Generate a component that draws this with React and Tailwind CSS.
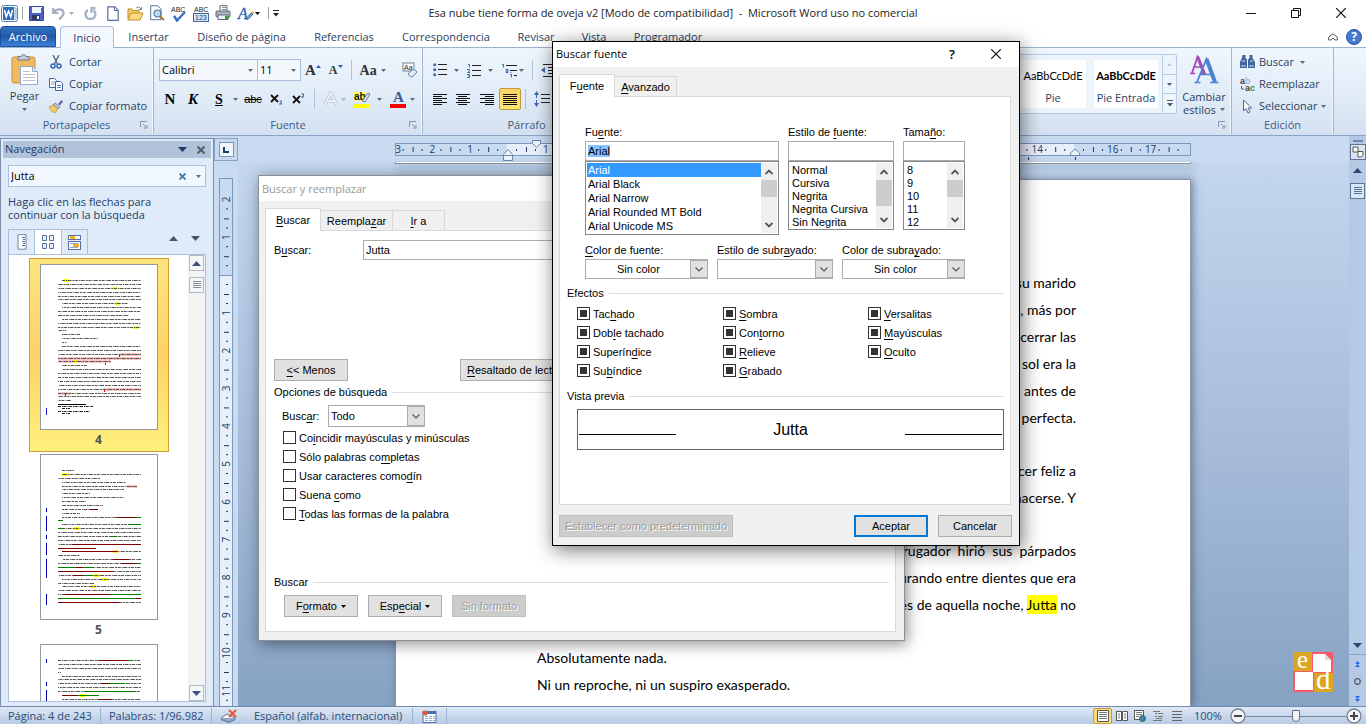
import { useEffect, useRef } from "react";

/* ---------- small shared pieces ---------- */

function Caret({ className = "" }) {
  return (
    <svg className={`shrink-0 ${className}`} width="5" height="3" viewBox="0 0 5 3" aria-hidden="true">
      <path d="M0 0h5L2.500 3z" fill="currentColor" />
    </svg>
  );
}

function IconButton({ label, className = "", children }) {
  return (
    <button type="button" aria-label={label} className={`flex shrink-0 items-center justify-center ${className}`}>
      {children}
    </button>
  );
}

function Launcher({ label }) {
  return (
    <IconButton label={label} className="absolute right-1 bottom-1 size-2.5">
      <svg width="8" height="8" viewBox="0 0 8 8" fill="none" stroke="#8496ad">
        <path d="M.5 6V.5H7M3 3l3 3M7 4v3H4" />
      </svg>
    </IconButton>
  );
}

function Group({ name, className = "", children, launcher = true, caption = true }) {
  return (
    <section
      aria-label={name}
      className={`relative flex flex-col border-r border-[#9fb4d0] shadow-[inset_-1px_0_0_#f4f9ff] ${className}`}
    >
      <div className="flex min-h-0 flex-1">{children}</div>
      <div className="flex h-[17px] shrink-0 items-center justify-center text-[#3e5b86]">{caption && name}</div>
      {launcher && <Launcher label={`Opciones de ${name}`} />}
    </section>
  );
}

/* ---------- title bar ---------- */

function WordIcon() {
  return (
    <svg width="17" height="17" viewBox="0 0 17 17">
      <rect x=".5" y=".5" width="16" height="16" rx="2" fill="#fff" stroke="#4a83bd" />
      <rect x="2" y="2" width="11" height="13" fill="#2b6cb5" />
      <path d="M13 3h2v11h-2M13 6h2M13 8.500h2M13 11h2" stroke="#7fa9d6" fill="none" />
      <path d="M3.500 5l1.700 7L7.500 6l2.300 6 1.700-7" stroke="#fff" strokeWidth="1.500" fill="none" />
    </svg>
  );
}

function QuickAccess() {
  return (
    <div className="flex h-6 items-center pl-px">
      <IconButton label="Word"><WordIcon /></IconButton>
      <span className="mx-1 h-3 w-px bg-[#a0a0a0]" />
      <IconButton label="Guardar" className="ml-0.5">
        <svg width="15" height="15" viewBox="0 0 15 15">
          <path d="M.5.500h14v14h-14z" fill="#4b63c6" stroke="#3a4da5" />
          <rect x="3" y="1" width="9" height="6" fill="#eef2fb" />
          <path d="M12.500 1v1" stroke="#fff" />
          <rect x="3" y="9" width="8" height="5" fill="#2e3b5c" />
          <rect x="8" y="10" width="2" height="3" fill="#fff" />
        </svg>
      </IconButton>
      <IconButton label="Deshacer" className="ml-2">
        <svg width="13" height="13" viewBox="0 0 13 13" fill="none" stroke="#a3b0c2" strokeWidth="2.200">
          <path d="M1.200 1v5h5M1.500 5.500C4 2 10 1 11.500 5c.8 3-1.500 5-4.500 7.500" />
        </svg>
      </IconButton>
      <Caret className="ml-1 text-[#a9a9a9]" />
      <IconButton label="Rehacer" className="ml-2.5">
        <svg width="13" height="13" viewBox="0 0 13 13" fill="none" stroke="#a3b0c2" strokeWidth="2.200">
          <path d="M4 3C0 5 1 12 6.500 12c5 0 6.500-6 3-9M6.500 1.200h5M7.500 1v5" />
        </svg>
      </IconButton>
      <IconButton label="Nuevo" className="ml-2.5">
        <svg width="12" height="15" viewBox="0 0 12 15">
          <path d="M.8.800h7l3.400 3.500v10H.8z" fill="#fff" stroke="#53719c" strokeWidth="1.200" />
          <path d="M7.500 1v3.500H11" fill="#d4e2f3" stroke="#53719c" />
        </svg>
      </IconButton>
      <IconButton label="Abrir" className="ml-2">
        <svg width="17" height="15" viewBox="0 0 17 15">
          <path d="M1 13V3h4l1 1.500h6V7" fill="#f6cf6b" stroke="#b98a25" />
          <path d="M1 14L4 7h12l-3 7z" fill="#fbdb80" stroke="#c3912a" />
          <path d="M9 2c2-1.500 4-1 5 1.500M12 3.500h2.500V1" fill="none" stroke="#6c7fa3" />
        </svg>
      </IconButton>
      <IconButton label="Vista preliminar" className="ml-1.5">
        <svg width="15" height="16" viewBox="0 0 15 16">
          <path d="M.7.700h7l3.300 3.500v10.500H.7z" fill="#fff" stroke="#53719c" />
          <circle cx="7.500" cy="8.500" r="3.500" fill="#bcd8f2" stroke="#5a7399" strokeWidth="1.200" />
          <path d="M10 11.500l4 3.500" stroke="#a8752c" strokeWidth="2" />
        </svg>
      </IconButton>
      <IconButton label="Ortografía" className="ml-1.5">
        <svg width="16" height="17" viewBox="0 0 16 17">
          <text x="0" y="7" fontSize="7" fontFamily="Liberation Sans" fill="#222">ABC</text>
          <path d="M3 11l3 4.500L14 7" stroke="#3b6fd1" strokeWidth="2.500" fill="none" />
        </svg>
      </IconButton>
      <IconButton label="Contar palabras" className="ml-1.5">
        <svg width="16" height="17" viewBox="0 0 16 17">
          <text x="1" y="7" fontSize="7" fontFamily="Liberation Sans" fill="#222">ABC</text>
          <rect x=".5" y="8.500" width="15" height="8" fill="#d9e4f5" stroke="#46649a" />
          <text x="2" y="15" fontSize="7" fontFamily="Liberation Sans" fill="#203a72">123</text>
        </svg>
      </IconButton>
      <IconButton label="Imprimir" className="ml-1.5">
        <svg width="16" height="16" viewBox="0 0 16 16">
          <path d="M5 6V.700h7V6" fill="#fff" stroke="#5a6880" />
          <path d="M7 2.500h4M7 4.500h4" stroke="#7fa17f" />
          <rect x="1" y="6" width="14" height="6" rx="1" fill="#a9b1bd" stroke="#606a7b" />
          <path d="M3 10h10v4.500H3z" fill="#eef1f5" stroke="#606a7b" />
          <rect x="10" y="11" width="4" height="3" fill="#3c9a3c" />
        </svg>
      </IconButton>
      <IconButton label="Estilos rápidos" className="ml-1.5">
        <svg width="17" height="16" viewBox="0 0 17 16">
          <text x="1" y="14" fontSize="16" fontStyle="italic" fontFamily="Liberation Serif" fill="#3465b5" stroke="#3465b5" strokeWidth=".4">A</text>
          <path d="M9 14l5-6 2 1-5 5.500z" fill="#8db4e8" stroke="#35588f" />
          <path d="M14 8l1.500-2L17 7l-1 2z" fill="#e0a94a" />
        </svg>
      </IconButton>
      <Caret className="ml-px text-black" />
      <span className="ml-2 h-3 w-px bg-[#9a9a9a]" />
      <IconButton label="Personalizar barra" className="ml-1">
        <svg width="6" height="7" viewBox="0 0 6 7"><path d="M0 .500h6" stroke="#222" /><path d="M0 3h6L3 6.500z" fill="#222" /></svg>
      </IconButton>
    </div>
  );
}

function TitleBar() {
  return (
    <header className="relative flex h-[26px] shrink-0 items-center justify-between bg-white">
      <div className="flex-1"><QuickAccess /></div>
      <h1 className="whitespace-pre text-[11px] text-[#1c1c1c]">
        Esa nube tiene forma de oveja v2 [Modo de compatibilidad]  -  Microsoft Word uso no comercial
      </h1>
      <div className="flex flex-1 justify-end gap-[35px] pr-5">
        <IconButton label="Minimizar">
          <svg width="10" height="10" viewBox="0 0 10 10"><path d="M0 5.500h10" stroke="#111" /></svg>
        </IconButton>
        <IconButton label="Restaurar">
          <svg width="10" height="10" viewBox="0 0 10 10" fill="none" stroke="#111"><path d="M.5 2.500h7v7h-7zM2.500 2V.500h7v7H8" /></svg>
        </IconButton>
        <IconButton label="Cerrar">
          <svg width="10" height="10" viewBox="0 0 10 10"><path d="M0 0l10 10M10 0L0 10" stroke="#111" strokeWidth="1.200" /></svg>
        </IconButton>
      </div>
    </header>
  );
}

/* ---------- ribbon ---------- */

function RibbonTabs() {
  return (
    <nav className="flex h-[22px] shrink-0 items-stretch border-b border-[#9cb3d0] bg-white leading-[22px] text-[#29415f]">
      <button type="button" className="w-14 rounded-t-sm border border-[#1a4f9e] bg-linear-to-b from-[#3673c2] via-[#1f58a9] to-[#3f82d8] leading-5 font-medium text-white">
        Archivo
      </button>
      <button type="button" className="-mb-px ml-1 h-[23px] w-[54px] rounded-t-sm border border-b-0 border-[#aabfdb] bg-[#f3f8fe]">Inicio</button>
      <button type="button" className="w-[67px] pl-0.5">Insertar</button>
      <button type="button" className="w-[119px] pl-0.5">Diseño de página</button>
      <button type="button" className="w-[88px]">Referencias</button>
      <button type="button" className="w-[114px] pl-0.5">Correspondencia</button>
      <button type="button" className="w-[66px] pl-0.5">Revisar</button>
      <button type="button" className="w-[50px] pl-0.5">Vista</button>
      <button type="button" className="w-[98px] pl-0.5">Programador</button>
      <div className="ml-auto flex items-center gap-2 pr-1">
        <IconButton label="Minimizar la cinta de opciones">
          <svg width="10" height="8" viewBox="0 0 10 8" fill="#fff" stroke="#55585e"><path d="M.7 4L5 .800 9.300 4v3H7L5 5 3 7H.700z" /></svg>
        </IconButton>
        <IconButton label="Ayuda" className="size-4 rounded-full border border-[#2453a8] bg-[#4579cf] text-[12px] leading-none font-bold text-white">?</IconButton>
      </div>
    </nav>
  );
}

function ClipboardGroup() {
  return (
    <Group name="Portapapeles" className="w-[154px]">
      <button type="button" className="flex w-[49px] flex-col items-center pt-1.5 text-[#29415f]">
        <svg width="28" height="32" viewBox="0 0 28 32">
          <rect x="1" y="3" width="23" height="26" rx="2" fill="#eebb62" stroke="#cb9235" />
          <path d="M7 5V2.500h3c.5-2.500 4.500-2.500 5 0h3V6H7z" fill="#c8ccd2" stroke="#6f7580" />
          <path d="M9.500 12.500h12l5 5v13h-17z" fill="#fff" stroke="#9aa9c3" />
          <path d="M21.500 12.500v5h5" fill="#dfe7f3" stroke="#9aa9c3" />
          <path d="M12 17.500h7M12 20.500h12M12 23.500h12M12 26.500h12" stroke="#b5bfd0" />
        </svg>
        <span className="mt-0.5 leading-4">Pegar</span>
        <Caret className="mt-1 text-[#5c6b80]" />
      </button>
      <div className="flex flex-col pt-[3px] text-[#29415f]">
        <button type="button" className="flex h-[22px] items-center gap-1.5">
          <svg width="14" height="14" viewBox="0 0 14 14" fill="none">
            <path d="M4 0l4.500 9M10 0L5.500 9" stroke="#60708c" strokeWidth="1.500" />
            <circle cx="4" cy="11" r="2" stroke="#2f62b8" strokeWidth="1.500" /><circle cx="10" cy="11" r="2" stroke="#2f62b8" strokeWidth="1.500" />
          </svg>
          Cortar
        </button>
        <button type="button" className="flex h-[22px] items-center gap-1.5">
          <svg width="14" height="13" viewBox="0 0 14 13" fill="#fff" stroke="#3f63a8">
            <path d="M.5.500h5l2 2v7h-7z" /><path d="M2 4h4M2 6h4" stroke="#8aa5d2" /><path d="M6.500 3.500h5l2 2v7h-7z" /><path d="M8 7.500h4M8 9.500h4" stroke="#5c7fc0" />
          </svg>
          Copiar
        </button>
        <button type="button" className="flex h-[22px] items-center gap-1.5 whitespace-nowrap">
          <svg width="14" height="13" viewBox="0 0 14 13">
            <path d="M9 4l3.500-4L14 1.500 11 5.500z" fill="#7a5bb0" />
            <path d="M6 3l5 4-2 2-5-4z" fill="#b9c1cc" stroke="#677182" strokeWidth=".7" />
            <path d="M4 5l5 4-3 4C3 12 1 10 0 7z" fill="#f1c86a" stroke="#b88c33" strokeWidth=".7" />
          </svg>
          Copiar formato
        </button>
      </div>
    </Group>
  );
}

function FontGroup() {
  return (
    <Group name="Fuente" className="w-[269px]">
      <div className="flex w-full flex-col gap-[7px] pt-[11px] pl-[5px]">
        <div className="flex h-[22px] items-center">
          <div className="flex h-[22px] w-[99px] items-center border border-[#a9bfdd] bg-[#f4f8fd] pr-1">
            <input aria-label="Fuente" defaultValue="Calibri" className="w-full min-w-0 bg-transparent pl-0.5 text-black outline-none" />
            <Caret className="text-[#5c6b80]" />
          </div>
          <div className="-ml-px flex h-[22px] w-11 items-center border border-[#a9bfdd] bg-[#f4f8fd] pr-1">
            <input aria-label="Tamaño de fuente" defaultValue="11" className="w-full min-w-0 bg-transparent pl-0.5 text-black outline-none" />
            <Caret className="text-[#5c6b80]" />
          </div>
          <IconButton label="Agrandar fuente" className="ml-1 font-['Liberation_Serif',serif] text-[15px] font-bold text-[#333]">
            A<svg className="mb-2" width="5" height="3" viewBox="0 0 5 3"><path d="M0 3h5L2.500 0z" fill="#2b5aa8" /></svg>
          </IconButton>
          <IconButton label="Encoger fuente" className="ml-2 font-['Liberation_Serif',serif] text-[12px] font-bold text-[#333]">
            A<svg className="mb-2" width="5" height="3" viewBox="0 0 5 3"><path d="M0 0h5L2.500 3z" fill="#2b5aa8" /></svg>
          </IconButton>
          <span className="mx-2 h-5 w-px bg-[#b3c3d9]" />
          <IconButton label="Cambiar mayúsculas y minúsculas" className="font-['Liberation_Serif',serif] text-[14px] font-bold text-[#333]">
            Aa<Caret className="ml-1 text-[#5c6b80]" />
          </IconButton>
          <IconButton label="Borrar formato" className="ml-4">
            <svg width="16" height="16" viewBox="0 0 16 16">
              <rect x="1" y="1" width="11" height="8" fill="#fff" stroke="#6f7f99" />
              <text x="2" y="8" fontSize="7" fontFamily="Liberation Sans" fill="#222">Aa</text>
              <path d="M6 12l4-4c2-1 4 0 5 2l-4 4.500c-2 1-4-.5-5-2.500z" fill="#dfe9f8" stroke="#6782ad" />
            </svg>
          </IconButton>
        </div>
        <div className="flex h-[22px] items-center font-['Liberation_Serif',serif] text-[14px] font-bold text-black">
          <button type="button" className="w-[22px] text-[15px]">N</button>
          <button type="button" className="w-[24px] text-[15px] italic">K</button>
          <button type="button" className="ml-1 w-5 underline">S</button>
          <Caret className="ml-1 text-[#5c6b80]" />
          <button type="button" className="ml-1.5 w-[18px] font-['Liberation_Sans',sans-serif] text-[11px] font-normal line-through">abc</button>
          <IconButton label="Subíndice" className="ml-1.5 w-4">
            <svg width="13" height="12" viewBox="0 0 13 12"><path d="M1 2l7 7M8 2L1 9" stroke="#111" strokeWidth="1.800" /><path d="M9.500 8h2v1.500l-2 1.500h2.500" stroke="#2b5aa8" fill="none" /></svg>
          </IconButton>
          <IconButton label="Superíndice" className="ml-1.5 w-4">
            <svg width="13" height="12" viewBox="0 0 13 12"><path d="M1 3l7 7M8 3L1 10" stroke="#111" strokeWidth="1.800" /><path d="M9.500 1h2v1.500l-2 1.500h2.500" stroke="#2b5aa8" fill="none" /></svg>
          </IconButton>
          <span className="mx-2 h-5 w-px bg-[#b3c3d9]" />
          <IconButton label="Efectos de texto" className="text-[#aab4c2]">
            <svg width="16" height="16" viewBox="0 0 16 16"><path d="M2 14L7.500 2 14 14M5 10h6.500" fill="none" stroke="#c3cbd6" strokeWidth="3.500" /><path d="M2 14L7.500 2 14 14M5 10h6.500" fill="none" stroke="#f7fafd" strokeWidth="1.300" /></svg>
            <Caret className="ml-0.5" />
          </IconButton>
          <IconButton label="Color de resaltado" className="ml-2">
            <svg width="17" height="18" viewBox="0 0 17 18">
              <rect x="0" y="2" width="12" height="9" fill="#ffff6b" />
              <text x="0" y="10" fontSize="10" fontFamily="Liberation Sans" fill="#111">ab</text>
              <path d="M8 11l6-8 2 1-5 8z" fill="#dfe6f0" stroke="#4c5f80" strokeWidth=".8" />
              <rect x="0" y="14" width="16" height="4" fill="#ff0" />
            </svg>
            <Caret className="ml-1.5 text-[#5c6b80]" />
          </IconButton>
          <IconButton label="Color de fuente" className="ml-2">
            <svg width="16" height="18" viewBox="0 0 16 18">
              <text x="3" y="12" fontSize="15" fontWeight="bold" fontFamily="Liberation Serif" fill="#3a5a98">A</text>
              <rect x="0" y="14" width="16" height="4" fill="#f00" />
            </svg>
            <Caret className="ml-1 text-[#5c6b80]" />
          </IconButton>
        </div>
      </div>
    </Group>
  );
}

function AlignIcon({ kind }) {
  const short = { left: [0, 9], center: [2, 11], right: [5, 14], full: [0, 14] }[kind];
  return (
    <svg width="14" height="13" viewBox="0 0 14 13" stroke="#111">
      {[0, 1, 2, 3, 4, 5].map((i) => {
        const [a, b] = i % 2 ? short : [0, 14];
        return <path key={i} d={`M${a} ${i * 2 + 1.5}H${b}`} />;
      })}
    </svg>
  );
}

function ParagraphGroup() {
  return (
    <Group name="Párrafo" className="w-[208px]" launcher={false}>
      <div className="flex flex-col gap-[7px] pt-[11px] pl-[10px]">
        <div className="flex h-[22px] items-center">
          <IconButton label="Viñetas">
            <svg width="14" height="14" viewBox="0 0 14 14"><path d="M5 1.500h9M5 6.500h9M5 11.500h9" stroke="#222" /><g fill="#3b66b0"><circle cx="1.700" cy="1.700" r="1.500" /><circle cx="1.700" cy="6.700" r="1.500" /><circle cx="1.700" cy="11.700" r="1.500" /></g></svg>
            <Caret className="ml-[7px] text-[#5c6b80]" />
          </IconButton>
          <IconButton label="Numeración" className="ml-2">
            <svg width="14" height="15" viewBox="0 0 14 15"><path d="M5 2.500h9M5 7.500h9M5 12.500h9" stroke="#222" /><path d="M1 1.500h1.500v3M0 6.500h2.500v1.500L.5 9.500h2.500M0 11.500h2.500v3H0M1 13h1.500" stroke="#3b66b0" fill="none" /></svg>
            <Caret className="ml-[7px] text-[#5c6b80]" />
          </IconButton>
          <IconButton label="Lista multinivel" className="ml-2">
            <svg width="16" height="15" viewBox="0 0 16 15"><path d="M5 2.500h11M9 7.500h7M13 12.500h3" stroke="#222" /><path d="M1 1.500h1.500v3M4.500 6.500h2.500v3H5V8h2M9 11.500h1.500v3M9.500 9.500h1" stroke="#3b66b0" fill="none" /></svg>
            <Caret className="ml-0.5 text-[#5c6b80]" />
          </IconButton>
          <span className="mx-2 h-5 w-px bg-[#b3c3d9]" />
          <IconButton label="Disminuir sangría">
            <svg width="15" height="14" viewBox="0 0 15 14"><path d="M2 1.500h13M7 4.500h8M7 7.500h8M7 10.500h8M2 13.500h13" stroke="#222" /><path d="M0 7l4-3v6z" fill="#3b66b0" /></svg>
          </IconButton>
        </div>
        <div className="flex h-[22px] items-center">
          <IconButton label="Alinear a la izquierda"><AlignIcon kind="left" /></IconButton>
          <IconButton label="Centrar" className="ml-[9px]"><AlignIcon kind="center" /></IconButton>
          <IconButton label="Alinear a la derecha" className="ml-2.5"><AlignIcon kind="right" /></IconButton>
          <IconButton label="Justificar" className="ml-[5px] size-[22px] rounded-xs border border-[#c29b3f] bg-linear-to-b from-[#fdd268] to-[#ffe773]"><AlignIcon kind="full" /></IconButton>
          <span className="mx-1 h-5 w-px bg-[#b3c3d9]" />
          <IconButton label="Interlineado" className="ml-1">
            <svg width="16" height="16" viewBox="0 0 16 16"><path d="M7 3.500h9M7 7.500h9M7 11.500h9" stroke="#222" /><path d="M2.500 2v12" stroke="#3b66b0" strokeDasharray="5 2" /><path d="M0 4l2.500-4L5 4zM0 12l2.500 4L5 12z" fill="#3b66b0" /></svg>
          </IconButton>
        </div>
      </div>
    </Group>
  );
}

function StylesGroup() {
  return (
    <Group name="Estilos" className="min-w-0 flex-1" caption={false}>
      <div className="mt-1.5 flex h-[60px] min-w-0 flex-1 items-stretch justify-end overflow-hidden rounded-xs border border-[#b6cbe5] bg-[#edf4fc]">
        <button type="button" className="my-[5px] w-[66px] shrink-0 bg-white text-[#29415f]">
          <span className="block pt-1 font-['Lato',sans-serif] text-[11px] leading-6 text-black">AaBbCcDdE</span>
          <span className="block leading-5">Pie</span>
        </button>
        <button type="button" className="my-[5px] mr-1 ml-2 w-16 shrink-0 overflow-hidden bg-white text-[#29415f]">
          <span className="block pt-1 font-['Lato',sans-serif] text-[11px] leading-6 font-bold text-black">AaBbCcDdE</span>
          <span className="block leading-5 whitespace-nowrap">Pie Entrada</span>
        </button>
        <div className="flex w-[14px] shrink-0 flex-col border-l border-[#b6cbe5]">
          <IconButton label="Fila anterior" className="flex-1 text-[#b9c6d8]"><Caret className="rotate-180" /></IconButton>
          <IconButton label="Fila siguiente" className="flex-1 border-y border-[#b6cbe5] text-[#4d5b70]"><Caret /></IconButton>
          <IconButton label="Más estilos" className="flex-1">
            <svg width="6" height="7" viewBox="0 0 6 7"><path d="M0 .500h6" stroke="#4d5b70" /><path d="M0 3h6L3 6.500z" fill="#4d5b70" /></svg>
          </IconButton>
        </div>
      </div>
      <button type="button" className="flex w-[54px] shrink-0 flex-col items-center pt-[7px] leading-[13px] text-[#29415f]">
        <svg width="30" height="30" viewBox="0 0 30 30">
          <g fill="none" stroke="#a54bb5">
            <path d="M3 18L8.500 2l3 8" strokeWidth="1.800" />
            <path d="M8.500 1.500L15 18" strokeWidth="3.200" />
            <path d="M5 12h7M1 18.500h5M12 18.500h5" strokeWidth="1.600" />
          </g>
          <g fill="none" stroke="#4d83d0">
            <path d="M8 27L17.500 4l2 5" strokeWidth="1.800" />
            <path d="M17.500 4L26 27" strokeWidth="4" />
            <path d="M11 19.500h11M5.500 27.500h6M21 27.500h8.500" strokeWidth="1.600" />
          </g>
        </svg>
        <span className="mt-[5px]">Cambiar</span>
        <span className="flex items-center gap-1">estilos <Caret className="text-[#5c6b80]" /></span>
      </button>
    </Group>
  );
}

function EditGroup() {
  return (
    <Group name="Edición" className="w-[102px]" launcher={false}>
      <div className="flex flex-col pt-[3px] pl-2 text-[#29415f]">
        <button type="button" className="flex h-[22px] items-center gap-1">
          <svg width="15" height="14" viewBox="0 0 15 14" fill="#40659f"><path d="M2.500 0h3v3L7 4.500V13H0V7l2-4zM9.500 0h3v3L15 7v6H8V4.500L9.500 3z" /><path d="M1 11h5M9 11h5M2 6h3M10 6h3" stroke="#d5e3f5" /></svg>
          Buscar <Caret className="ml-0.5 text-[#5c6b80]" />
        </button>
        <button type="button" className="flex h-[22px] items-center gap-1">
          <svg width="15" height="15" viewBox="0 0 15 15" fontFamily="Liberation Sans" fontWeight="bold" fontSize="9"><text x="0" y="7" fill="#444">a</text><text x="5" y="7" fill="#aeb9c7">b</text><text x="5" y="14" fill="#444">a</text><text x="10" y="14" fill="#2a932a">c</text><path d="M1.500 9v3H4" fill="none" stroke="#3b66b0" /></svg>
          Reemplazar
        </button>
        <button type="button" className="flex h-[22px] items-center gap-1">
          <svg width="15" height="15" viewBox="0 0 15 15"><path d="M3.500 1v11l2.500-2.500L8 14l2-1-2-4h3.500z" fill="#fff" stroke="#51658a" /></svg>
          Seleccionar <Caret className="text-[#5c6b80]" />
        </button>
      </div>
    </Group>
  );
}

function Ribbon() {
  return (
    <div className="flex h-[88px] shrink-0 border-b border-[#8aa3c4] bg-linear-to-b from-[#f0f6fd] via-[#e2edf8] to-[#d4e1f1] pb-px">
      <ClipboardGroup />
      <FontGroup />
      <ParagraphGroup />
      <StylesGroup />
      <EditGroup />
      <div className="w-8 shrink-0" />
    </div>
  );
}

/* ---------- navigation pane ---------- */

const FULL = [18, 101];
const INDENT = [22, 101];
const RED = "#800000";
const GREEN = "#008000";
const YEL = "#ffff00";
const PINK = "#f9c6c6";

const PAGES = [
  {
    number: 4,
    selected: true,
    lines: [
      [INDENT, [24, 29, YEL]], [FULL], [FULL, [73, 77, YEL]], [FULL], [FULL], [FULL], [[22, 88], [75, 80, YEL]], [INDENT], [FULL], [[18, 89]],
      [INDENT], [FULL], [FULL, [93, 98, YEL]], [[18, 26]], [[22, 40]], [[22, 58]], [[22, 27]], [INDENT], [FULL], [FULL, [79, 101, PINK]],
      [FULL, [18, 101, PINK]], [[18, 71], [18, 71, PINK], [33, 38, YEL]], [[22, 47]], [INDENT], [FULL], [FULL], [FULL], [FULL],
      [FULL, [64, 101, PINK]], [FULL, [18, 31, PINK]], [FULL], [[18, 31]],
    ],
    marks: [[144, 7]],
    notes: true,
  },
  {
    number: 5,
    lines: [
      [[22, 34]], [INDENT, [22, 27, YEL]], [[18, 60]], [[22, 86]], [[22, 97], [87, 97, PINK]], [[22, 84]], [[22, 50]], [[22, 84]], [[22, 46]], [[22, 63]],
      [[22, 58], [50, 58, RED]], [[22, 40]], [INDENT, [77, 96, RED], [96, 101, GREEN]], [[18, 23], [18, 23, GREEN]], [INDENT, [88, 101, GREEN]],
      [FULL, [18, 23, GREEN], [34, 39, YEL]], [FULL], [FULL, [70, 77, GREEN]], [FULL], [FULL, [32, 101, RED]], [[18, 56], [18, 56, RED]],
      [INDENT, [22, 78, RED], [73, 78, YEL]], [[18, 40]], [INDENT, [73, 89, RED]], [FULL, [82, 98, RED], [98, 101, GREEN]],
      [FULL, [18, 36, GREEN], [36, 43, RED], [43, 54, GREEN]], [FULL, [18, 73, RED]], [FULL, [33, 43, RED], [43, 53, GREEN], [54, 59, YEL]],
      [INDENT, [62, 67, YEL]], [[18, 54]], [INDENT, [51, 55, YEL]], [FULL], [FULL, [25, 70, RED], [70, 101, GREEN]],
      [FULL, [18, 96, GREEN], [96, 101, RED]], [FULL, [18, 79, RED]],
    ],
    marks: [[54, 4], [62, 15], [81, 4], [89, 12], [105, 19], [140, 11]],
  },
  {
    number: 6,
    lines: [
      [FULL, [59, 87, RED], [87, 91, GREEN]], [FULL], [FULL], [[18, 21]], [INDENT], [FULL], [FULL, [61, 70, RED], [70, 85, GREEN]], [FULL],
      [FULL, [45, 95, GREEN]], [[22, 59], [22, 38, RED], [38, 59, GREEN], [40, 45, YEL]], [INDENT, [59, 72, RED]], [FULL], [FULL],
    ],
    marks: [[15, 4], [38, 4], [46, 14]],
  },
];

function Thumbnail({ page }) {
  return (
    <svg width="118" height="166" viewBox="0 0 118 166" role="img" aria-label={`Página ${page.number}`}>
      <rect x=".5" y=".5" width="117" height="165" fill="#fff" stroke="#9299a6" />
      {page.lines.map(([span, ...runs], i) => {
        const y = Math.round(16 + i * 3.88) + 0.5;
        return (
          <g key={i}>
            {runs.filter((r) => r[2] === PINK || r[2] === YEL).map((r, k) => (
              <rect key={k} x={r[0]} y={y - 1.5} width={r[1] - r[0]} height="3" fill={r[2]} />
            ))}
            <path d={`M${span[0]} ${y}H${span[1]}`} stroke="#555" strokeDasharray="3 1 1 .5 4 1 2 .7" strokeDashoffset={i * 5} />
            {runs.filter((r) => r[2] === RED || r[2] === GREEN).map((r, k) => (
              <path key={k} d={`M${r[0]} ${y}H${r[1]}`} stroke={r[2]} />
            ))}
          </g>
        );
      })}
      {page.notes && (
        <g stroke="#222">
          <path d="M18 140.500h28" stroke="#000" />
          <path d="M18 142.500h35M22 144.500h8M18 147.500h32M22 149.500h8" strokeDasharray="3 1 1 .5" />
          <path d="M79.500 91v2M65.500 99v2M64.500 126v2M25.500 130v2" stroke="#f00" />
        </g>
      )}
      {page.marks.map(([y, h]) => <rect key={y} x="6" y={y} width="1" height={h} fill={page.notes ? "#1a1ad0" : "#0000a8"} />)}
    </svg>
  );
}

function NavigationPane() {
  return (
    <aside className="mt-0.5 flex w-[214px] shrink-0 flex-col border-x border-t border-[#7c90ad] bg-[#dfebf9] p-0.5 pb-1">
      <div className="flex h-[17px] shrink-0 items-center bg-[#b1c2da] px-0.5 text-[#223c66]">
        <h2 className="flex-1">Navegación</h2>
        <IconButton label="Opciones del panel"><svg width="9" height="5" viewBox="0 0 9 5"><path d="M0 0h9L4.500 5z" fill="#1e3a66" /></svg></IconButton>
        <IconButton label="Cerrar panel" className="mr-1 ml-2.5"><svg width="8" height="8" viewBox="0 0 8 8"><path d="M.5.500l7 7M7.500.500l-7 7" stroke="#555c68" strokeWidth="2" /></svg></IconButton>
      </div>
      <div className="flex min-h-0 flex-1 flex-col px-[5px] pt-[7px]">
        <div className="flex h-[22px] shrink-0 items-center border border-[#a9bfdd] bg-[#f1f7fe] pr-1">
          <input aria-label="Buscar en el documento" defaultValue="Jutta" className="w-full min-w-0 flex-1 bg-transparent pl-0.5 text-black outline-none" />
          <IconButton label="Borrar búsqueda"><svg width="7" height="7" viewBox="0 0 7 7"><path d="M.5.500l6 6M6.500.500l-6 6" stroke="#3a6ea5" strokeWidth="1.600" /></svg></IconButton>
          <Caret className="ml-2.5 text-[#5c6b80]" />
        </div>
        <p className="mt-2 h-[34px] shrink-0 leading-[13px] text-[#223c66]">Haga clic en las flechas para<br />continuar con la búsqueda</p>
        <div className="flex h-[25px] shrink-0 items-stretch">
          <IconButton label="Títulos" className="w-[27px] border border-b-0 border-[#a9bfdd]">
            <svg width="10" height="16" viewBox="0 0 10 16"><path d="M1 .700h8v14.500H1z" fill="#fff" stroke="#6d83a8" /><path d="M5 3.500h3M6 5.500h2M5 7.500h3M6 9.500h2M5 11.500h3" stroke="#556b92" /></svg>
          </IconButton>
          <IconButton label="Páginas" className="-mx-px w-7 border border-b-0 border-[#a9bfdd] bg-white">
            <svg width="12" height="14" viewBox="0 0 12 14" fill="#e8f0fb" stroke="#5672a3"><path d="M.5.500h4v5h-4zM7.500.500h4v5h-4zM.5 8.500h4v5h-4zM7.500 8.500h4v5h-4z" /></svg>
          </IconButton>
          <IconButton label="Resultados" className="w-[27px] border border-b-0 border-[#a9bfdd]">
            <svg width="13" height="15" viewBox="0 0 13 15"><rect x=".5" y=".5" width="12" height="4" fill="#fff" stroke="#5672a3" /><rect x="2" y="1" width="5" height="3" fill="#f6ad2f" /><rect x=".5" y="6.500" width="12" height="8" fill="#fff" stroke="#5672a3" /><rect x="5" y="9" width="6" height="3" fill="#f6ad2f" /><path d="M2 8.500h8M2 12.500h8" stroke="#8fa4c8" /></svg>
          </IconButton>
          <div className="ml-auto flex items-center gap-[13px] pr-1.5 pb-1.5">
            <IconButton label="Resultado anterior"><svg width="9" height="5" viewBox="0 0 9 5"><path d="M0 5h9L4.500 0z" fill="#4c5361" /></svg></IconButton>
            <IconButton label="Resultado siguiente"><svg width="9" height="5" viewBox="0 0 9 5"><path d="M0 0h9L4.500 5z" fill="#4c5361" /></svg></IconButton>
          </div>
        </div>
        <div className="flex min-h-0 flex-1 border border-[#a9bfdd] bg-white">
          <ol className="flex min-w-0 flex-1 flex-col items-center gap-px overflow-hidden pt-[3px]">
            {PAGES.map((p) => (
              <li
                key={p.number}
                className={
                  p.selected
                    ? "flex w-[140px] shrink-0 flex-col items-center border border-[#cf9b35] bg-linear-to-b from-[#fee57c] via-[#fdd268] to-[#fff07c] pt-[5px]"
                    : "flex shrink-0 flex-col items-center border border-transparent"
                }
              >
                <Thumbnail page={p} />
                <span className="h-[21px] text-[12px] leading-5 font-bold text-[#4f5358]">{p.number}</span>
              </li>
            ))}
          </ol>
          <div className="flex w-[17px] flex-col items-center bg-[#f3f3f3]">
            <IconButton label="Subir" className="h-4 w-[15px] border border-[#b5b8bd] bg-[#f5f6f8] text-[#3c4f7c]"><svg width="9" height="5" viewBox="0 0 9 5"><path d="M0 5h9L4.500 0z" fill="currentColor" /></svg></IconButton>
            <div className="mt-1.5 flex h-4 w-[15px] items-center justify-center border border-[#b5b8bd] bg-[#f5f6f8]"><svg width="8" height="8" viewBox="0 0 8 8"><path d="M0 .500h8M0 2.500h8M0 4.500h8M0 6.500h8" stroke="#8a8f98" /></svg></div>
            <IconButton label="Bajar" className="mt-auto h-4 w-[15px] border border-[#b5b8bd] bg-[#f5f6f8] text-[#3c4f7c]"><svg width="9" height="5" viewBox="0 0 9 5"><path d="M0 0h9L4.500 5z" fill="currentColor" /></svg></IconButton>
          </div>
        </div>
      </div>
    </aside>
  );
}

/* ---------- rulers ---------- */

const CM = 37.8;

function HorizontalRuler() {
  const zero = 112;
  const cells = Array.from({ length: 21 }, (_, i) => i - 3);
  return (
    <svg width="796" height="22" viewBox="0 0 796 22" role="img" aria-label="Regla horizontal">
      <rect x=".5" y="3.500" width="795" height="12" fill="#c9dbf0" stroke="#7c97bc" />
      <rect x={zero} y="4" width={15 * CM} height="11" fill="#e7f0fa" />
      {cells.map((n) => {
        const x = zero + n * CM;
        return (
          <g key={n} fill="#203a63" fontSize="10" fontFamily="Open Sans" textAnchor="middle">
            {n !== 0 && n !== 15 && n < 18 && <text x={n === -3 ? 3 : x + 1} y="13">{Math.abs(n)}</text>}
            <rect x={x + 9} y="9" width="1" height="2" />
            {x + 19 < 790 && <rect x={x + 19} y="7" width="1" height="5" />}
            {x + 28 < 790 && <rect x={x + 28} y="9" width="1" height="2" />}
          </g>
        );
      })}
      <path d="M108.500 20.500v-6l4.500-5 4.500 5v6zM108.500 15.500h9M137.500.500h8v3l-4 4-4-4z" fill="#eef4fb" stroke="#6c87ad" />
      <path d="M675.500 15.500v-2.500l4.500-4 4.500 4v2.500z" fill="#eef4fb" stroke="#6c87ad" />
      <path d="M633.500 17v3M680.500 17v3" stroke="#203a63" />
    </svg>
  );
}

function VerticalRuler() {
  const zero = 97;
  return (
    <svg width="14" height="530" viewBox="0 0 14 530" role="img" aria-label="Regla vertical">
      <rect x=".5" y=".5" width="13" height="540" fill="#e7f0fa" stroke="#7c97bc" />
      <rect x="1" y="1" width="12" height={zero - 1} fill="#c9dbf0" />
      <path d={`M0 ${zero + 0.5}h14`} stroke="#7c97bc" />
      {Array.from({ length: 14 }, (_, i) => i - 2).map((n) => {
        const y = zero + n * CM;
        return (
          <g key={n} fill="#203a63" fontSize="10" fontFamily="Open Sans" textAnchor="middle">
            {n !== 0 && <text transform={`translate(11 ${y}) rotate(-90)`}>{Math.abs(n)}</text>}
            <rect x="7" y={y + 9} width="2" height="1" />
            <rect x="5" y={y + 19} width="5" height="1" />
            <rect x="7" y={y + 28} width="2" height="1" />
          </g>
        );
      })}
    </svg>
  );
}

/* ---------- document ---------- */

const PARAGRAPHS = [
  ["y su marido", "noche, más por", "de cerrar las", "el sol era la", "mucho antes de", "vida perfecta."],
  ["para hacer feliz a", "deshacerse. Y"],
];

function DocumentPage() {
  return (
    <article className="ml-[157px] min-h-0 w-[796px] flex-1 border border-b-0 border-[#8d949e] bg-white pt-[89px] pr-[114px] pl-[113px] font-['Lato',sans-serif] text-[14px] leading-[27px] text-black shadow-[2px_0_8px_rgba(60,80,110,0.6)]">
      {PARAGRAPHS.map((lines, i) => (
        <p key={i} className="mb-[26px] text-right">
          {lines.map((l) => <span key={l} className="block">{l}</span>)}
        </p>
      ))}
      <p className="mb-[26px] text-right whitespace-pre">
        <span className="block">El sol madrugador  hirió  sus  párpados</span>
        <span className="block">murmurando entre dientes que era</span>
        <span className="block">Después de aquella noche, <mark className="bg-[#ffff00] py-px">Jutta</mark> no</span>
      </p>
      <p className="pl-7">Absolutamente nada.</p>
      <p className="pl-7">Ni un reproche, ni un suspiro exasperado.</p>
    </article>
  );
}

function BrandMark() {
  return (
    <svg className="absolute right-4 bottom-[14px]" width="40" height="40" viewBox="0 0 40 40" role="img" aria-label="ed">
      <rect width="40" height="40" fill="#f9596b" />
      <path d="M20 2h12l6 6v12H20zM2 20h18v18H2z" fill="#fff" />
      <path d="M32 2v6h6z" fill="#d9dce0" />
      <path d="M0 0h19v19H0zM21 21h19v19H21z" fill="#dca523" />
      <g fontFamily="Liberation Serif" fontSize="25" fill="#fff"><text x="4" y="16">e</text><text x="23" y="37" fontSize="29">d</text></g>
    </svg>
  );
}

function Workspace() {
  return (
    <main className="relative flex min-w-0 flex-1 bg-linear-to-b from-[#c6d9f0] via-[#a9bedb] to-[#86a2c3]">
      <div className="flex w-6 shrink-0 flex-col items-center bg-[#c9dbf1] pt-0.5">
        <IconButton label="Tabulación" className="h-[23px] w-6 shrink-0 border border-[#8aa3c4] bg-[#c5d8f0]">
          <span className="flex size-[15px] items-center justify-center border border-[#7c97bc] bg-[#eff5fc]">
            <svg width="6" height="6" viewBox="0 0 6 6"><path d="M1 0v5h5" fill="none" stroke="#1e3a66" strokeWidth="2" /></svg>
          </span>
        </IconButton>
        <div className="mt-[17px] min-h-0 flex-1 overflow-hidden"><VerticalRuler /></div>
      </div>
      <div className="flex min-w-0 flex-1 flex-col overflow-hidden">
        <div className="h-[26px] shrink-0 bg-[#c9dbf1] pt-1 pl-[157px]"><HorizontalRuler /></div>
        <div className="mb-[15px] ml-[157px] h-0.5 w-[796px] shrink-0 border-x border-b border-[#8d949e] bg-white shadow-[2px_4px_8px_rgba(60,80,110,0.6)]" />
        <DocumentPage />
      </div>
      <div className="relative">
        <BrandMark />
      </div>
      <div className="flex w-[17px] shrink-0 flex-col items-center bg-[#b4c9e4]">
        <div className="mt-0.5 h-1 w-2.5 border-b-2 border-[#6c87ad]" />
        <IconButton label="Regla" className="mt-0.5 h-4 w-4 shrink-0 border border-[#5c7498] bg-[#dbe4ef]">
          <svg width="12" height="12" viewBox="0 0 12 12" fill="#fff" stroke="#555"><path d="M1 1h5v5H1zM6 5.500h5v4L9 11H6z" /></svg>
        </IconButton>
        <IconButton label="Desplazar arriba" className="mt-2"><svg width="9" height="5" viewBox="0 0 9 5"><path d="M0 5h9L4.500 0z" fill="#2d436d" /></svg></IconButton>
        <div className="mt-2.5 flex h-4 w-[15px] shrink-0 items-center justify-center border border-[#5c7498] bg-[#d9e6f5]"><svg width="8" height="8" viewBox="0 0 8 8"><path d="M0 .500h8M0 2.500h8M0 4.500h8M0 6.500h8" stroke="#556f97" /></svg></div>
        <IconButton label="Desplazar abajo" className="mt-auto"><svg width="9" height="5" viewBox="0 0 9 5"><path d="M0 0h9L4.500 5z" fill="#2d436d" /></svg></IconButton>
        <div className="mt-1.5 flex w-full flex-col items-center gap-2.5 border-t border-[#8aa3c4] pt-1.5 pb-1">
          <IconButton label="Página anterior"><svg width="5" height="7" viewBox="0 0 5 7" fill="#2a6cf0"><path d="M0 3l2.500-3L5 3zM0 6l2.500-3L5 6z" /></svg></IconButton>
          <IconButton label="Seleccionar objeto"><svg width="7" height="7" viewBox="0 0 7 7"><circle cx="3.500" cy="3.500" r="2.800" fill="none" stroke="#555" strokeWidth="1.200" /></svg></IconButton>
          <IconButton label="Página siguiente"><svg width="5" height="7" viewBox="0 0 5 7" fill="#2a6cf0"><path d="M0 1l2.500 3L5 1zM0 4l2.500 3L5 4z" /></svg></IconButton>
        </div>
      </div>
    </main>
  );
}

/* ---------- status bar ---------- */

function StatusBar() {
  return (
    <footer className="flex h-[18px] shrink-0 items-center overflow-hidden border-t border-[#6f8bb0] bg-linear-to-b from-[#dfe9f6] to-[#b6cae3] pt-px leading-4 text-[#2a4a78]">
      <span className="w-[101px] border-r border-[#9db3d0] pl-2 whitespace-nowrap">Página: 4 de 243</span>
      <span className="w-[111px] border-r border-[#9db3d0] pl-2 whitespace-nowrap">Palabras: 1/96.982</span>
      <IconButton label="Revisión" className="w-[34px]">
        <svg width="16" height="14" viewBox="0 0 16 14"><path d="M0 9l6-4 8 4-6 4z" fill="#fff" stroke="#5572a0" /><path d="M0 9v1.500l8 3 6-3V9" fill="#8ea7cd" stroke="#5572a0" /><path d="M8 1l7 7M15 1L8 8" stroke="#ee5533" strokeWidth="2" /></svg>
      </IconButton>
      <span className="ml-2 whitespace-nowrap">Español (alfab. internacional)</span>
      <IconButton label="Macros" className="ml-2.5 h-full border-x border-[#9db3d0] px-[9px]">
        <svg width="15" height="13" viewBox="0 0 15 13"><rect x="1" y="1.500" width="13" height="11" fill="#fff" stroke="#4770b5" /><rect x="1" y="1" width="13" height="3" fill="#4770b5" /><path d="M3 6.500h10M3 8.500h10M3 10.500h10" stroke="#8aa5d2" strokeDasharray="3 1" /><circle cx="3" cy="3" r="2.500" fill="#e4553a" /></svg>
      </IconButton>
      <div className="ml-auto flex h-full items-center">
        <IconButton label="Diseño de impresión" className="mr-px h-4 w-[19px] rounded-xs border border-[#c29b3f] bg-[#fddc79]"><svg width="12" height="12" viewBox="0 0 12 12"><path d="M.5.500h11v11H.500z" fill="#fff" stroke="#555" /><path d="M2 2.500h8M2 4.500h8M2 6.500h8M2 8.500h8" stroke="#777" /></svg></IconButton>
        <IconButton label="Lectura" className="w-[18px]"><svg width="12" height="11" viewBox="0 0 12 11"><path d="M.5.500h5v9h-5zM6.500.500h5v9h-5z" fill="#fff" stroke="#555" /><path d="M2 3h2M2 5h2M2 7h2M8 3h2M8 5h2M8 7h2" stroke="#777" /></svg></IconButton>
        <IconButton label="Diseño web" className="w-[17px]"><svg width="12" height="12" viewBox="0 0 12 12"><path d="M.5.500h9v9h-9z" fill="#fff" stroke="#555" /><path d="M2 2.500h6M2 4.500h6M2 6.500h3" stroke="#777" /><circle cx="8.500" cy="8.500" r="3" fill="#3f83b5" stroke="#2c6b4a" /></svg></IconButton>
        <IconButton label="Esquema" className="w-[19px]"><svg width="10" height="10" viewBox="0 0 10 10"><path d="M0 .500h7M2 2.500h2M5 2.500h5M2 5.500h2M5 5.500h5M0 9.500h9M3 7.500h6" stroke="#777" /></svg></IconButton>
        <IconButton label="Borrador" className="w-[19px]"><svg width="10" height="10" viewBox="0 0 10 10"><path d="M0 .500h10M0 3.500h10M0 6.500h10M0 9.500h10" stroke="#666" /></svg></IconButton>
        <span className="ml-2 w-9 whitespace-nowrap">100%</span>
        <IconButton label="Alejar"><svg width="16" height="16" viewBox="0 0 16 16"><circle cx="8" cy="8" r="7" fill="#f1f4f8" stroke="#7a828e" strokeWidth="1.300" /><path d="M4 8h8" stroke="#444" strokeWidth="2" /></svg></IconButton>
        <input
          type="range"
          aria-label="Zoom"
          defaultValue="50"
          className="h-3.5 w-[100px] appearance-none bg-[linear-gradient(#6f87ab,#6f87ab)] bg-[length:100%_1px] bg-center bg-no-repeat [&::-webkit-slider-thumb]:h-3 [&::-webkit-slider-thumb]:w-2 [&::-webkit-slider-thumb]:appearance-none [&::-webkit-slider-thumb]:rounded-b-full [&::-webkit-slider-thumb]:border [&::-webkit-slider-thumb]:border-[#66707f] [&::-webkit-slider-thumb]:bg-[#f1f4f8]"
        />
        <IconButton label="Acercar" className="mr-1"><svg width="16" height="16" viewBox="0 0 16 16"><circle cx="8" cy="8" r="7" fill="#f1f4f8" stroke="#7a828e" strokeWidth="1.300" /><path d="M4 8h8M8 4v8" stroke="#444" strokeWidth="2" /></svg></IconButton>
      </div>
    </footer>
  );
}

/* ---------- dialog controls ---------- */

/* Marks the access key of a label with an underline: "B&uscar" underlines the u. */
function Key({ text }) {
  const at = text.indexOf("&");
  if (at < 0) return text;
  return <>{text.slice(0, at)}<u className="underline-offset-2">{text[at + 1]}</u>{text.slice(at + 2)}</>;
}

function Check({ id, text, mixed = false }) {
  const ref = useRef(null);
  useEffect(() => {
    ref.current.indeterminate = mixed;
  }, [mixed]);
  return (
    <div className="flex h-[19px] items-center gap-[3px]">
      <input
        ref={ref}
        id={id}
        type="checkbox"
        className="grid size-[13px] shrink-0 appearance-none place-content-center border border-[#333] bg-white indeterminate:before:block indeterminate:before:size-[7px] indeterminate:before:bg-[#333] indeterminate:before:content-['']"
      />
      <label htmlFor={id} className="whitespace-nowrap"><Key text={text} /></label>
    </div>
  );
}

function Combo({ id, options, className = "h-5", selectClass = "" }) {
  return (
    <div className={`flex border border-[#acacac] bg-white ${className}`}>
      <div className="relative flex w-full">
        <select id={id} className={`w-full appearance-none bg-transparent outline-none ${selectClass}`}>
          {options.map((o) => <option key={o}>{o}</option>)}
        </select>
        <span className="pointer-events-none absolute inset-y-0 right-0 flex w-[17px] items-center justify-center border border-r-0 border-[#acacac] bg-[#e1e1e1]">
          <svg width="8" height="5" viewBox="0 0 8 5"><path d="M.5.500L4 4 7.500.500" fill="none" stroke="#555" strokeWidth="1.200" /></svg>
        </span>
      </div>
    </div>
  );
}

function Heading({ children }) {
  return (
    <h3 className="flex h-[14px] items-center gap-[5px] whitespace-nowrap after:h-px after:flex-1 after:bg-[#dcdcdc] after:content-['']">
      {children}
    </h3>
  );
}

function PushButton({ className = "justify-center", primary = false, disabled = false, children }) {
  const look = disabled
    ? "border border-[#bfbfbf] bg-[#cccccc] text-[#9d9d9d] [text-shadow:1px_1px_0_#fff]"
    : primary
      ? "border-2 border-[#0078d7] bg-[#e1e1e1]"
      : "border border-[#adadad] bg-[#e1e1e1]";
  return (
    <button type="button" disabled={disabled} className={`flex h-[22px] shrink-0 items-center whitespace-nowrap ${look} ${className}`}>
      {children}
    </button>
  );
}

function Tabs({ items }) {
  return (
    <div role="tablist" className="flex h-[22px] items-end">
      {items.map(([text, size], i) => (
        <button
          key={text}
          type="button"
          role="tab"
          aria-selected={i === 0}
          className={
            i === 0
              ? `relative z-10 -mb-px h-[23px] border border-b-0 border-[#d9d9d9] bg-white ${size}`
              : `-ml-px h-5 border border-b-0 border-[#d9d9d9] bg-[#f0f0f0] ${size}`
          }
        >
          <Key text={text} />
        </button>
      ))}
    </div>
  );
}

/* ---------- find & replace dialog ---------- */

function FindDialog() {
  return (
    <div
      role="dialog"
      aria-label="Buscar y reemplazar"
      className="absolute top-[175px] left-[258px] flex h-[466px] w-[647px] flex-col border border-[#8a8f98] bg-[#f0f0f0] font-['Liberation_Sans',sans-serif] text-[11px] leading-[14px] text-black shadow-[2px_3px_14px_rgba(0,0,0,0.45)]"
    >
      <div className="flex h-[25px] shrink-0 items-center bg-white pl-[3px] font-['Open_Sans',sans-serif] text-[#999]">Buscar y reemplazar</div>
      <div className="flex flex-1 flex-col pt-[7px] pr-2 pb-2 pl-1.5">
        <Tabs items={[["&Buscar", "w-[56px]"], ["Reempla&zar", "w-[73px]"], ["&Ir a", "w-[53px]"]]} />
        <div className="flex flex-1 flex-col border border-[#d9d9d9] bg-white pt-[9px] pr-1.5 pl-2">
          <div className="flex h-5 items-center">
            <label htmlFor="find" className="w-[89px]"><Key text="B&uscar:" /></label>
            <input id="find" defaultValue="Jutta" className="h-5 min-w-0 flex-1 border border-[#acacac] pl-0.5 outline-none" />
          </div>
          <div className="mt-[99px] flex gap-28">
            <PushButton className="w-[74px] justify-center"><Key text="&<< Menos" /></PushButton>
            <PushButton className="w-[116px] justify-start pl-1.5"><Key text="&Resaltado de lectura" /></PushButton>
          </div>
          <div className="mt-1"><Heading>Opciones de búsqueda</Heading></div>
          <div className="mt-1.5 flex items-center pl-2">
            <label htmlFor="scope" className="w-[46px]"><Key text="Busc&ar:" /></label>
            <Combo id="scope" options={["Todo"]} className="h-[22px] w-[97px]" selectClass="pl-0.5" />
          </div>
          <div className="flex flex-col pt-px pl-[9px]">
            <Check id="c1" text="Co&incidir mayúsculas y minúsculas" />
            <Check id="c2" text="Sólo palabras co&mpletas" />
            <Check id="c3" text="Usar caracteres como&dín" />
            <Check id="c4" text="Suena &como" />
            <Check id="c5" text="&Todas las formas de la palabra" />
          </div>
          <div className="mt-auto"><Heading>Buscar</Heading></div>
          <div className="mt-1.5 mb-3.5 flex gap-2.5 pl-2.5">
            <PushButton className="w-[74px] justify-center gap-1"><span><Key text="F&ormato" /></span><Caret /></PushButton>
            <PushButton className="w-[74px] justify-center gap-1"><span><Key text="Esp&ecial" /></span><Caret /></PushButton>
            <PushButton className="w-[74px] justify-center" disabled>Sin formato</PushButton>
          </div>
        </div>
      </div>
    </div>
  );
}

/* ---------- font dialog ---------- */

function ListScroll({ thumb }) {
  return (
    <div className="flex w-4 shrink-0 flex-col items-center bg-[#f0f0f0]">
      <span className="flex h-[17px] items-center"><svg width="8" height="6" viewBox="0 0 8 6"><path d="M.5 5L4 1.500 7.500 5" fill="none" stroke="#555" strokeWidth="1.800" /></svg></span>
      <span className={`w-full bg-[#cdcdcd] ${thumb}`} />
      <span className="mt-auto flex h-[17px] items-center"><svg width="8" height="6" viewBox="0 0 8 6"><path d="M.5 1L4 4.500 7.500 1" fill="none" stroke="#555" strokeWidth="1.800" /></svg></span>
    </div>
  );
}

function ListField({ id, label, value = "", items, active, className, row, thumb, inputRef }) {
  return (
    <div className={className}>
      <label htmlFor={id} className="block h-4 whitespace-nowrap"><Key text={label} /></label>
      <input
        id={id}
        ref={inputRef}
        defaultValue={value}
        className="block h-5 w-full border border-[#acacac] pl-0.5 outline-none selection:bg-[#85c2ff] selection:text-black"
      />
      <div className="flex border border-[#828790] p-px">
        <ul role="listbox" aria-label={label.replace("&", "")} className="min-w-0 flex-1">
          {items.map((t) => (
            <li key={t} role="option" aria-selected={t === active} className={`whitespace-nowrap ${row} ${t === active ? "bg-[#3399ff] text-white" : ""}`}>
              {t}
            </li>
          ))}
        </ul>
        <ListScroll thumb={thumb} />
      </div>
    </div>
  );
}

function ComboField({ id, label, options, className }) {
  return (
    <div className={className}>
      <label htmlFor={id} className="block h-4 whitespace-nowrap"><Key text={label} /></label>
      <Combo id={id} options={options} selectClass="pl-[31px]" />
    </div>
  );
}

function FontDialog() {
  const font = useRef(null);
  useEffect(() => {
    font.current.focus();
    font.current.select();
  }, []);
  return (
    <div
      role="dialog"
      aria-label="Buscar fuente"
      className="absolute top-[41px] left-[552px] flex h-[505px] w-[468px] flex-col border border-black bg-[#f0f0f0] font-['Liberation_Sans',sans-serif] text-[11px] leading-[14px] text-black shadow-[2px_4px_18px_rgba(0,0,0,0.55)]"
    >
      <div className="flex h-[25px] shrink-0 items-center bg-white pr-[18px] pb-0.5 pl-[3px] font-['Open_Sans',sans-serif]">
        <h2 className="flex-1">Buscar fuente</h2>
        <IconButton label="Ayuda" className="mr-9 text-[13px] font-semibold">?</IconButton>
        <IconButton label="Cerrar"><svg width="10" height="10" viewBox="0 0 10 10"><path d="M0 0l10 10M10 0L0 10" stroke="#111" strokeWidth="1.200" /></svg></IconButton>
      </div>
      <div className="flex flex-1 flex-col pt-[7px] pr-[7px] pb-2 pl-1.5">
        <Tabs items={[["F&uente", "w-[56px]"], ["&Avanzado", "w-[63px]"]]} />
        <div className="mr-px flex flex-1 flex-col border border-[#d9d9d9] bg-white pt-7 pr-1.5 pl-[7px]">
          <div className="flex items-start gap-[9px] pl-[18px]">
            <ListField id="ff" inputRef={font} label="Fu&ente:" value="Arial" active="Arial" className="w-[194px]" row="h-[14px] px-px" thumb="h-[17px]" items={["Arial", "Arial Black", "Arial Narrow", "Arial Rounded MT Bold", "Arial Unicode MS"]} />
            <ListField id="fs" label="Estilo de &fuente:" className="w-[106px]" row="h-[13px] px-0.5" thumb="h-[26px]" items={["Normal", "Cursiva", "Negrita", "Negrita Cursiva", "Sin Negrita"]} />
            <ListField id="ft" label="Tama&ño:" className="w-[62px]" row="h-[13px] px-0.5" thumb="h-[17px]" items={["8", "9", "10", "11", "12"]} />
          </div>
          <div className="mt-2 flex items-start gap-[9px] pl-[18px]">
            <ComboField id="cc" label="&Color de fuente:" options={["Sin color"]} className="w-[123px]" />
            <ComboField id="cs" label="Estilo de subr&ayado:" options={[""]} className="w-[116px]" />
            <ComboField id="cu" label="Color de subra&yado:" options={["Sin color"]} className="w-[123px]" />
          </div>
          <div className="mt-[7px]"><Heading>Efectos</Heading></div>
          <div className="mt-1 flex pl-2.5">
            <div className="w-[146px]">
              <Check mixed id="e1" text="Tac&hado" />
              <Check mixed id="e2" text="Dob&le tachado" />
              <Check mixed id="e3" text="Superín&dice" />
              <Check mixed id="e4" text="Su&bíndice" />
            </div>
            <div className="w-[145px]">
              <Check mixed id="e5" text="&Sombra" />
              <Check mixed id="e6" text="Con&torno" />
              <Check mixed id="e7" text="&Relieve" />
              <Check mixed id="e8" text="&Grabado" />
            </div>
            <div>
              <Check mixed id="e9" text="&Versalitas" />
              <Check mixed id="e10" text="&Mayúsculas" />
              <Check mixed id="e11" text="&Oculto" />
            </div>
          </div>
          <div className="mt-[9px]"><Heading>Vista previa</Heading></div>
          <div className="mt-1.5 ml-2.5 flex h-[41px] items-center justify-between border border-[#646464] px-px text-[16px]">
            <span className="mt-2.5 h-px w-[97px] bg-black" />
            <span>Jutta</span>
            <span className="mt-2.5 h-px w-[97px] bg-black" />
          </div>
        </div>
        <div className="mt-2.5 flex">
          <PushButton className="w-[174px] justify-center" disabled>Establecer como predeterminado</PushButton>
          <PushButton className="mr-2.5 ml-auto w-[74px] justify-center" primary>Aceptar</PushButton>
          <PushButton className="w-[74px] justify-center">Cancelar</PushButton>
        </div>
      </div>
    </div>
  );
}

export default function App() {
  return (
    <div className="relative flex h-screen w-full flex-col overflow-hidden bg-[#c9dbf1] font-['Open_Sans',sans-serif] text-[11px]">
      <TitleBar />
      <RibbonTabs />
      <Ribbon />
      <div className="flex min-h-0 flex-1">
        <NavigationPane />
        <Workspace />
      </div>
      <StatusBar />
      <FindDialog />
      <FontDialog />
    </div>
  );
}
